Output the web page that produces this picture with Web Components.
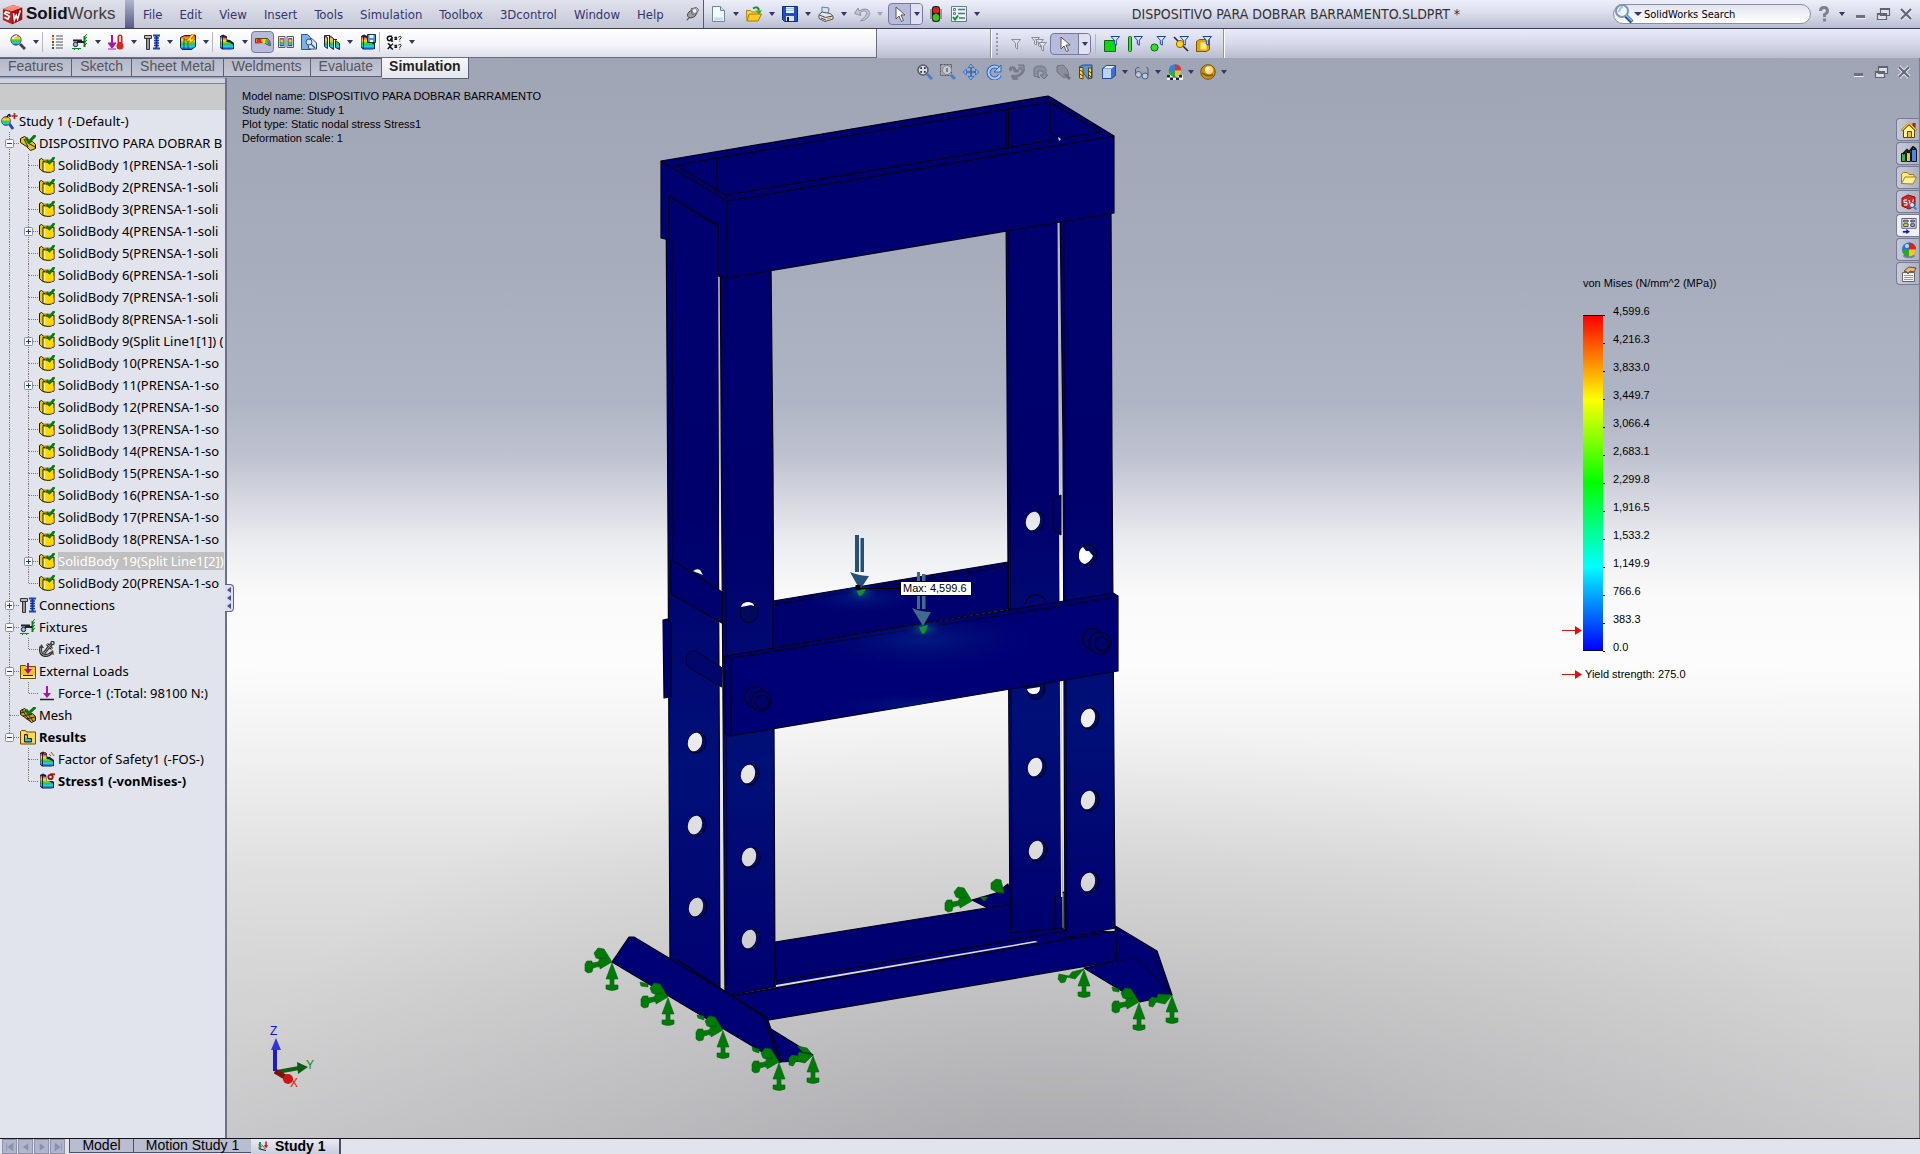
<!DOCTYPE html>
<html lang="en">
<head>
<meta charset="utf-8">
<title>SolidWorks - DISPOSITIVO PARA DOBRAR BARRAMENTO.SLDPRT</title>
<style>
  html, body { margin: 0; height: 100%; overflow: hidden; background: #e1e4ec; }
  body { font-family: "Noto Sans", "Open Sans", sans-serif; font-size: 13px; color: #000; }
</style>
</head>
<body>
<sw-app></sw-app>
<script>
const RAINBOW = `<linearGradient id="r" x1="0" y1="0" x2="0" y2="1"><stop offset="0" stop-color="#f22"/><stop offset=".3" stop-color="#fd2"/><stop offset=".6" stop-color="#2c3"/><stop offset=".8" stop-color="#2cf"/><stop offset="1" stop-color="#13c"/></linearGradient>`;
const FUNNEL = `<path d="M7 0.5h8.500l-3.200 3.700v5l-2-1.200v-3.800z" fill="#dcebff" stroke="#1a3fa8"/>`;
const YBODY = `<path d="M.5 2.500l2-1 3 2.500v11l-3-1.500-2-2z" fill="#e8c820" stroke="#201800"/><path d="M4 4.500q5.500 2 11-.5v10q-5 3-11 .5z" fill="#ffd800" stroke="#201800"/><path d="M5.500 6v8" stroke="#fff3a0" stroke-width="1.500"/><path d="M9 14.500q3 .3 5.500-1V9" stroke="#ff9f00" fill="none"/><path d="M3 2.500h10l-1 2-4 1z" fill="#b98a00"/><path d="M7.500 3.500l3 2.500 5-6" fill="none" stroke="#0a7a10" stroke-width="2.600"/>`;
const STAIR = `<path d="M1 2l3-1.500 4 2v3l3 .5 4 3v6l-3 .5H3l-2-2z" fill="#124"/><path d="M4 3l3.500 1v4l3 .5 3.500 2V15H4z" fill="url(#r)"/><path d="M1.500 3L3 2.500v12l-1.500-1.500z" fill="url(#r)"/>`;
const CUBE = `<path d="M1.500 4.500l4-3h9v10l-4 3h-9z" fill="#3f6fc8" stroke="#274a8f"/><path d="M2 5h8v9H2z" fill="#b9d4f6"/><path d="M2.500 4.500l3-2.500h8l-3 2.500z" fill="#e4f0ff"/>`;
const PRINTBODY = `<path d="M4 1l7 1-1 6-6-1z" fill="#cfe4fa" stroke="#5d7ea8"/><path d="M1 8.500l3-2.500 8 1.500 3 2.500v3l-8 2.500-6-3z" fill="#e4e6ea" stroke="#555"/><path d="M1.500 9l6 2.500 7-1.500M3 12l5 2" stroke="#444" fill="none"/><path d="M9 13l4-1" stroke="#d93"/>`;
const ICONS = {
  logo: [24, `<path d="M1 6L12 1.500 22 4.500v13L11 22.500 1 18z" fill="#c01d1d"/><path d="M1 6L12 1.500 22 4.500 11 8.500z" fill="#ff8d80"/><path d="M11 8.500L22 4.500v13l-11 5z" fill="#9c1010"/><path d="M8.500 10.500l-4-1.500-1.500 2 5 3-1.500 3-4-2" fill="none" stroke="#fff" stroke-width="1.900"/><path d="M12.500 10.500l1 7.500 2-5 1.500 4 3-9.500" fill="none" stroke="#fff" stroke-width="1.700"/>`],
  pin: [16, `<path d="M8 9l-6 6" stroke="#555" stroke-width="1.500"/><ellipse cx="8" cy="8" rx="5.500" ry="4" transform="rotate(-30 8 8)" fill="#9a9eaa" stroke="#444"/><path d="M7 2l6-1.500 2.500 2.500L13 8l-5 0z" fill="#c9ccd6" stroke="#555"/><circle cx="11" cy="4.500" r="2.800" fill="#f4f5f8" stroke="#777"/>`],
  newdoc: [16, `<path d="M2.500.5h8l4 4v11h-12z" fill="#f3faff" stroke="#6d8799"/><path d="M10.500.5v4h4" fill="#cfe2ee" stroke="#6d8799"/><path d="M4 13h9" stroke="#c9dbe8" stroke-width="3"/>`],
  open: [16, `<path d="M.5 4.500h4l1 1.500h7v8.500H1z" fill="#ffdf5a" stroke="#a9780c"/><path d="M3 8h12.500l-3.500 7H1z" fill="#ffc928" stroke="#a9780c"/><path d="M7 2.500q5-3 6 2" stroke="#1a8f1a" stroke-width="2" fill="none"/><path d="M9.500 4.500h6.500l-3 4z" fill="#27b227"/>`],
  save: [16, `<path d="M.5.500h15v15h-13l-2-2z" fill="#1e4fc4" stroke="#0d2c80"/><path d="M4 1h8v6H4z" fill="#eaf2ff"/><path d="M4 2.500h8M4 4.500h8" stroke="#a9c1ee"/><path d="M4 10h8v5H4z" fill="#dfe6f2"/><path d="M5 11h2v4H5z" fill="#123"/>`],
  print: [16, PRINTBODY],
  undo: [16, `<path d="M4 2L.5 7.500l6.500 2-1.200-2.700Q11 3 12.500 6.500 13 10 6.500 15q9-1.500 9-8.500-2-6-10.500-1.700z" fill="#c4c7d2" stroke="#8d91a2"/>`],
  cursor: [16, `<path d="M4 1v12l3-3 2.500 5.500 2-1L9 9h4z" fill="#fff" stroke="#555"/>`],
  light: [16, `<rect x="4" y="0" width="8" height="16" rx="3" fill="#1c1c1c"/><circle cx="8" cy="4.300" r="3.200" fill="#e02020"/><circle cx="8" cy="11.500" r="3.400" fill="#3ec81e"/><path d="M3 3v10M13 3v10" stroke="#555"/>`],
  options: [16, `<path d="M.5.500h15v15H.5z" fill="#e8f4f8" stroke="#5d7f8f"/><path d="M2.500 2.500h2v2h-2zM2.500 6.500h2v2h-2z" fill="none" stroke="#678"/><path d="M7 3.500h7M7 7.500h7M8 12h6" stroke="#57707e" stroke-width="1.500"/><path d="M2 11l2 2.500 3-4" stroke="#0a9a20" stroke-width="2" fill="none"/>`],
  search: [20, `<circle cx="8" cy="7" r="6" fill="#eef7ff" stroke="#7d95ad" stroke-width="2"/><path d="M5 8q1-5 4-5" stroke="#9fc2e0" stroke-width="2" fill="none"/><path d="M12 12l6 6" stroke="#255b9b" stroke-width="4"/><path d="M12 11l6 6" stroke="#8fc3ee" stroke-width="1.500"/>`],
  help: [16, `<path d="M4.500 5q0-3.500 3.500-3.500T11.500 5q0 2-3 3.500v2.500" fill="none" stroke="#7d8192" stroke-width="3"/><path d="M7 12.500h3v3H7z" fill="#7d8192"/>`],
  min: [16, `<path d="M4 9h9v3H4z" fill="#6c7080"/><path d="M4 12.500h9.500" stroke="#eef"/>`],
  restore: [16, `<path d="M5.500 2.500h9v7h-9zM2.500 7.500h9v6h-9z" fill="#dfe1ea" stroke="#5f6372" stroke-width="1.200"/><path d="M5 3h10M2 8h10" stroke="#5f6372" stroke-width="2"/>`],
  close: [16, `<path d="M3 3l10 10M13 3L3 13" stroke="#e8e9f2" stroke-width="4"/><path d="M3 3l10 10M13 3L3 13" stroke="#646878" stroke-width="2.200"/>`],
  magnify: [16, `<path d="M10 10l5 5" stroke="#445" stroke-width="3"/><circle cx="6" cy="6" r="5.200" fill="url(#r)" stroke="#567"/><path d="M3 5q1-3 4-3" stroke="#fff" stroke-width="1.500" fill="none"/>`],
  list: [16, `<path d="M7 2h7M7 5h7M7 8h7M7 11h7M7 14h7" stroke="#555"/><path d="M3 1h2v2H3z" fill="#c33"/><path d="M3 4h2v2H3z" fill="#e83"/><path d="M3 7h2v2H3z" fill="#c22"/><path d="M3 10h2v2H3z" fill="#3a3"/><path d="M3 13h2v2H3z" fill="#33c"/>`],
  fixture: [16, `<path d="M12 3l3-3M12 6l3-3M12 9l3-3M12 12l3-3" stroke="#0a8a1a"/><path d="M12.500 2v11" stroke="#0a7a14" stroke-width="2"/><path d="M1 6.500h9M5 8h7" stroke="#222" stroke-width="2"/><circle cx="3.500" cy="10.500" r="2.200" fill="#9db8e8" stroke="#223"/><path d="M0 14.500h9M2 16l2-2M6 16l2-2" stroke="#0a8a1a"/>`],
  load: [16, `<path d="M4 1v10" stroke="#b010b0" stroke-width="2"/><path d="M0 9h8l-4 5zM0 15h8" fill="#b010b0" stroke="#b010b0"/><path d="M12 3v9" stroke="#c8262a" stroke-width="5" stroke-linecap="round"/><circle cx="12" cy="12" r="3.500" fill="#d22"/><path d="M12 2v6" stroke="#fff" stroke-width="1.500"/>`],
  connect: [16, `<path d="M.5 1.500h7v3h-7z" fill="#bbb" stroke="#333"/><path d="M2.500 4.500h3v11h-3z" fill="#999" stroke="#333"/><path d="M9 1.500h7M9 14.500h7" stroke="#124ab0" stroke-width="2"/><path d="M10 4h5M10 6.500h5M10 9h5M10 11.500h5" stroke="#1133a0" stroke-width="1.500"/><path d="M12.500 2v12" stroke="#1133a0" stroke-width="2"/>`],
  run: [16, `<path d="M.5 3.500l4-2h11v11l-4 3H2l-1.500-2z" fill="url(#r)" stroke="#124"/><path d="M4 4v10.500M8 6v9M4 6l8-1" stroke="#124" stroke-width=".7"/><path d="M12 0L6 7h4l-3 5 8-7h-4l4-5z" fill="#ffe640" stroke="#b35b00" stroke-width=".7"/>`],
  stair: [16, STAIR],
  deform: [16, `<path d="M.5 4.500h12q3 2 3 7l-4-1q-1-2-3-2l-8 .5z" fill="#fa7a20" stroke="#641"/><path d="M4 5v3.500" stroke="#e22" stroke-width="4"/><path d="M9 5v4" stroke="#fd2" stroke-width="3"/><path d="M11 6l1.500 4" stroke="#3c4" stroke-width="2.500"/><path d="M13.500 7l1 4" stroke="#28d" stroke-width="2"/>`],
  compare: [16, `<path d="M.5 2.500h6.500v11H.5zM9 2.500h6.500v11H9z" fill="#eef" stroke="#557"/><path d="M2 4.500h3.500v7.500H2zM10.500 4.500H14v7.500h-3.500z" fill="url(#r)" stroke="#223" stroke-width=".5"/>`],
  doc: [16, `<path d="M.5.500h6l3 3v12h-9z" fill="#7fb0ea" stroke="#2b5590"/><path d="M6 6.500l5-2 4.500 4.500v6H8z" fill="#dce9f6" stroke="#27466e"/><circle cx="8" cy="8" r="3" fill="#c9e2fa" stroke="#34567e"/><path d="M10 10l4 4" stroke="#34567e" stroke-width="1.500"/>`],
  section: [16, `<path d="M.5 1.500l3 2v11l-3-2zM5.500 1.500l4 3v11l-4-3zM11.500 6.500l4 3v6l-4-2z" fill="url(#r)" stroke="#224"/><path d="M1 1.500h5M10 5.500h3" stroke="#224"/>`],
  savestair: [16, STAIR + `<path d="M7.500.5h8v8h-8z" fill="#4d8ee0" stroke="#134"/><path d="M9.500 1h4v3h-4z" fill="#eef"/><path d="M10 6h3v2h-3z" fill="#fff"/>`],
  ax: [18, `<g fill="none" stroke="#111" stroke-width="1.600"><path d="M7 2.500H4q-2.500 0-2.500 2.500t3 2.500L7 3.500l-.500 4.500h1.500M2 11q2 0 3 3t3 3M8 11q-3 2-6 6M9.500 4h3M9.500 6h3M9.500 13h3M9.500 15h3" /><path d="M14 3.500q3-2 3 .5l-1.500 2v.6M14 12.500q3-2 3 .5l-1.500 2v.6M15.500 7.500v1M15.500 16.500v1" stroke-width="1.100"/></g>`],
  funnel: [16, `<path d="M3.500 3.500h9L9.500 7v6l-2-1.500V7z" fill="#e0e2ea" stroke="#8a8e9c"/>`],
  funnels: [16, `<g fill="#e0e2ea" stroke="#8a8e9c"><path d="M.5 1.500h8L5.500 5v4l-2-1V5z"/><path d="M4.500 3.500h8L9.500 7v4l-2-1V7z"/><path d="M7.500 6.500h8L12.500 10v5l-2-1v-4z"/></g>`],
  ffacet: [16, `<path d="M.5 4.500h11v11H.5z" fill="#14d614" stroke="#0a6a0a"/>` + FUNNEL],
  fedge: [16, `<rect x="1.500" y=".5" width="3" height="15" rx="1" fill="#3ae03a" stroke="#0a6a0a"/>` + FUNNEL],
  fvert: [16, `<circle cx="4.500" cy="11.500" r="3.600" fill="#2fe02f" stroke="#0a6a0a"/>` + FUNNEL],
  faxis: [16, FUNNEL + `<path d="M1 1l14 14" stroke="#222" stroke-width="1.500"/><circle cx="7" cy="8" r="3.600" fill="#ffd21c" stroke="#8a6200"/>`],
  fbody: [16, `<path d="M.5 5.500l3-2h10v10l-3 2H.5z" fill="#e2a800" stroke="#7c5600"/><path d="M4.500 6.500h6v7h-6z" fill="#ffe98a"/>` + FUNNEL],
  zoomfit: [16, `<circle cx="6" cy="6" r="5" fill="#d6d9e2" stroke="#555a68" stroke-width="1.500"/><path d="M4 5V4h1M7 4h1v1M8 7v1H7M5 8H4V7" stroke="#222" stroke-width="1.300" fill="none"/><path d="M10 10l5 5" stroke="#4d80c0" stroke-width="3"/>`],
  zoomarea: [16, `<path d="M.5.500h11v11H.5z" fill="none" stroke="#555" stroke-dasharray="2 1"/><circle cx="7" cy="6" r="4.500" fill="#c5cad8" stroke="#888"/><path d="M7 4v4" stroke="#333"/><path d="M11 11l4 4" stroke="#4d80c0" stroke-width="3"/>`],
  pan: [16, `<path d="M8 1v14M1 8h14" stroke="#2f63b8" stroke-width="1.500"/><path d="M8 0l3 3.500H5zM8 16l3-3.500H5zM0 8l3.500-3v6zM16 8l-3.500-3v6z" fill="#8ab6ee" stroke="#2f63b8" stroke-width=".8"/>`],
  rotate: [16, `<path d="M13 4.500A6 6 0 1 0 14 11" fill="none" stroke="#2f63b8" stroke-width="4"/><path d="M13 4.500A6 6 0 1 0 14 11" fill="none" stroke="#a9ccf4" stroke-width="2"/><path d="M8 8h7V1z" fill="#a9ccf4" stroke="#2f63b8"/>`],
  g1: [16, `<path d="M2 7q-2-4 3-3l1 3 4 0M10 5q5-3 4 2-2 5-10 6M3 11l2 4 4-1" fill="none" stroke="#777b8a" stroke-width="3"/><path d="M9 1h6v6" fill="#8c909e" stroke="#6f7382"/>`],
  g2: [16, `<path d="M2 12V6q0-4 6-4t6 4v5h2l-4 4-4-4h3V7H6v5l2 2z" fill="#8c909e" stroke="#6f7382"/>`],
  g3: [16, `<path d="M2 2l6-1 4 4 2 6-5 3-7-6z" fill="#8c909e" stroke="#6f7382"/><path d="M10 10l5 5" stroke="#6f7382" stroke-width="3"/>`],
  sectview: [16, `<path d="M1 3l4-2h9v13l-4 1z" fill="#5b93e0" stroke="#234a86"/><path d="M1.500 3.500h3.500v11.500l-3.500-1z" fill="#ffd93b" stroke="#5a4600"/><path d="M10.500 4h3v10h-3z" fill="#ffd93b" stroke="#5a4600"/><path d="M2 6l3 2M2 10l3 2M11 7l2 2M11 11l2 2" stroke="#5a4600"/>`],
  cube: [16, CUBE],
  glasses: [16, `<circle cx="4.500" cy="10.500" r="3" fill="#b8cbe2" stroke="#4b5a70"/><circle cx="11" cy="12" r="3" fill="#b8cbe2" stroke="#4b5a70"/><path d="M1.500 10V5q2-3 4-1M14 11V4.500q0-1-1.500-1" fill="none" stroke="#4b5a70"/>`],
  scene: [16, `<path d="M0 11h16v5H0z" fill="#eee"/><path d="M0 11h3v2.500H0zM6 11h3v2.500H6zM12 11h3v2.500h-3zM3 13.500h3V16H3zM9 13.500h3V16H9z" fill="#222"/><circle cx="8" cy="6.500" r="6.300" fill="#3b7de0"/><path d="M8 6.500V.200A6.300 6.300 0 0 1 14.300 6.500z" fill="#d33"/><path d="M8 6.500h6.300A6.300 6.300 0 0 1 8 12.800z" fill="#e2c53a"/><path d="M8 6.500v6.300A6.300 6.300 0 0 1 1.700 6.500z" fill="#3aa53a"/>`],
  gold: [16, `<circle cx="8" cy="8" r="7.300" fill="#c8901c" stroke="#7a5408"/><circle cx="9" cy="6" r="4" fill="#ffdc78"/><circle cx="7.500" cy="5" r="2" fill="#fff4cc"/><path d="M2 9q5 4 11 2" stroke="#7a5408" fill="none" stroke-width="1.500"/>`],
  home: [16, `<path d="M11.500 1h3v6h-3z" fill="#b01818"/><path d="M2.500 8L8 3l5.500 5v7.500h-11z" fill="#fff2a0" stroke="#5c4300"/><path d="M.5 8.500L8 1.500l7.500 7" fill="none" stroke="#b87b00" stroke-width="2"/><path d="M1 7.800L8 1.200l7 6.600" fill="none" stroke="#ffd840"/><path d="M6.500 9.500h4v6h-4z" fill="#f2c21c" stroke="#5c4300"/>`],
  library: [16, `<path d="M.5 7.500h4v8h-4z" fill="#35b545" stroke="#111"/><path d="M5.500 6.500h4v9h-4z" fill="#f0c81e" stroke="#111"/><path d="M10.500 3.500h5v12h-5z" fill="#4b86e8" stroke="#111"/><path d="M2 8l4-4 2 2 4-5 3 2" stroke="#111" fill="none" stroke-width="2"/>`],
  folder: [16, `<path d="M.5 13.500V4l2-1.500h4l1.500 2h5V7" fill="#ffe88a" stroke="#a87a10"/><path d="M.5 13.500L4 7h11.500L12 14z" fill="#fff09a" stroke="#a87a10"/>`],
  swsearch: [16, `<path d="M1 4l6-3 7 2v9l-6 3-7-3z" fill="#cf2a2a" stroke="#8a0f0f"/><path d="M6 6H3v2.500h3V11H3M8 6l1 5 1-3 1 3 1.500-6" stroke="#fff" fill="none"/><circle cx="11" cy="11" r="2.500" fill="#cfe6ff" stroke="#456"/><path d="M12.500 12.500l3 3" stroke="#3b7de0" stroke-width="2"/>`],
  palette: [18, `<path d="M1 .5h16v11H1z" fill="#eef3ff" stroke="#446"/><path d="M3 2.500h5v2H3zM3 6.500h5v3H3z" fill="#f0e040" stroke="#334"/><path d="M11 2.500h4v2h-4zM11 6.500h4v3h-4z" fill="#9db8d8" stroke="#334"/><path d="M2 15.500h5" stroke="#0a1ab8" stroke-width="2"/><path d="M6 12.500l4 3-4 2.500z" fill="#0a1ab8"/>`],
  ball: [16, `<ellipse cx="8" cy="14" rx="6" ry="2" fill="#7b7f8e"/><circle cx="8" cy="7.500" r="7" fill="#2f6fe0"/><path d="M8 7.500V.500A7 7 0 0 1 15 7.500z" fill="#d82222"/><path d="M8 7.500h7A7 7 0 0 1 8 14.500z" fill="#f0c81e"/><path d="M8 7.500v7A7 7 0 0 1 1 7.500z" fill="#2aa52a"/><circle cx="6" cy="4" r="2" fill="#bcd6ff"/>`],
  props: [16, `<path d="M1.500 6.500h12v9h-12z" fill="#f4f4f4" stroke="#666"/><path d="M3 9.500h9M3 11.500h9M3 13.500h9" stroke="#999"/><path d="M3 5l5-4 7 1-2 4-4-1-2 3-1-2z" fill="#e8b97c" stroke="#70471a"/>`],
  study: [18, `<path d="M8 10l5 7" stroke="#2349b0" stroke-width="3"/><circle cx="6" cy="9" r="4.500" fill="url(#r)" stroke="#567"/><path d="M7 5q3-5 3 0" stroke="#111" fill="none" stroke-width="1.500"/><path d="M14.500 1v6M11.500 4h6" stroke="#c01818" stroke-width="1.600"/>`],
  part: [16, `<path d="M.5 3.500l4-2 3 2v4l5-1 3 3v4l-5 2-4-4-6-4z" fill="#e9c61c" stroke="#201800"/><path d="M4 4l4 8M8 8l7 4" stroke="#201800"/><path d="M6 3l3 4 6.500-7" fill="none" stroke="#0a7a10" stroke-width="3"/>`],
  body: [16, YBODY],
  anchor: [16, `<g fill="none"><path d="M12.500 3L5 12M8 3l5 5" stroke="#333" stroke-width="3"/><path d="M12.500 3L5 12M8 3l5 5" stroke="#aaa"/><circle cx="13.500" cy="2" r="1.600" stroke="#333" stroke-width="1.300"/><path d="M2 5.500Q0 14 6.500 14.500q4 0 6-3" stroke="#222" stroke-width="3"/><path d="M2 5.500Q0 14 6.500 14.500q4 0 6-3" stroke="#aaa"/></g><path d="M0 7l2.500-4L5 7zM10 12l4-3 1 5z" fill="#444"/>`],
  loads: [16, `<path d="M.5 2.500h5l1 1h9v12H.5z" fill="#f4c21c" stroke="#6b4a00"/><path d="M1 12h14v3H1z" fill="#fbe9b0"/><path d="M8 0v7" stroke="#a010a0" stroke-width="2"/><path d="M4 6h8l-4 5z" fill="#a010a0"/><path d="M3 12.500h10" stroke="#222"/>`],
  force: [16, `<path d="M8 1v8" stroke="#b010b0" stroke-width="2"/><path d="M4 8h8l-4 5z" fill="#b010b0"/><path d="M1 14.500h14" stroke="#222" stroke-width="1.500"/>`],
  mesh: [16, `<path d="M.5 3.500l4-2 4 3v3l4-1 3 3v4l-4 2-5-4-6-4z" fill="#c9a21c" stroke="#201800"/><path d="M2 3l8 11M5 3l8 11M1 6l7-2M3 9l9-2M6 12l9-2" stroke="#201800" stroke-width=".9"/><path d="M6 3l3 3 6.500-6" fill="none" stroke="#0a7a10" stroke-width="3"/>`],
  results: [16, `<path d="M.5 2.500l1-1h4l1 1.500h9v12H.5z" fill="#ffd84a" stroke="#6b4a00"/><path d="M4.500 5.500h3v4h4v3.500h-7z" fill="url(#r)" stroke="#222"/>`],
  fos: [16, STAIR + `<path d="M5 1l2 2M7 1L5 3M10 3l2 2M12 1l3 4" stroke="#c33510"/>`],
  stress: [16, STAIR + `<path d="M7 0h9v8H8z" fill="#e1e4ec"/><circle cx="11.500" cy="4" r="2.200" fill="none" stroke="#a01010" stroke-width="1.800"/><path d="M11 1.300h5" stroke="#a01010" stroke-width="1.800"/>`],
  studytab: [16, `<path d="M4 3v9l8 2" stroke="#222" stroke-width="1.500" fill="none"/><path d="M2 6l4 3M2 10l3 3M5 3L3 5" stroke="#1a8a1a" stroke-width="1.500"/><path d="M6 6l5 6" stroke="#444"/><path d="M12 2v6" stroke="#c01818" stroke-width="2"/><path d="M9 7h6l-3 4z" fill="#c01818"/>`],
  first: [16, `<path d="M3.500 3v10M12 3v10L5 8z" fill="#8c90ab" stroke="#8c90ab"/>`],
  prev: [16, `<path d="M11 3v10L4 8z" fill="#8c90ab"/>`],
  next: [16, `<path d="M5 3v10l7-5z" fill="#8c90ab"/>`],
  last: [16, `<path d="M12.500 3v10M4 3v10l7-5z" fill="#8c90ab" stroke="#8c90ab"/>`]
};

function define(name, css, html) {
  const tpl = document.createElement('template');
  tpl.innerHTML = `<style>*{box-sizing:border-box}button{font:inherit;color:inherit;border:0;padding:0;margin:0;background:none}${css}</style>`;
  customElements.define(name, class extends HTMLElement {
    connectedCallback() {
      if (this.shadowRoot) return;
      const root = this.attachShadow({ mode: 'open' });
      root.append(tpl.content.cloneNode(true));
      const body = document.createElement('template');
      body.innerHTML = typeof html === 'function' ? html(this) : html;
      root.append(body.content.cloneNode(true));
    }
  });
}

/* one drawn glyph */
define('sw-icon', `:host{display:inline-block;flex:none;width:16px;height:16px}svg{display:block;width:100%;height:100%}`, el => {
  const [box, art] = ICONS[el.getAttribute('name')];
  return `<svg viewBox="0 0 ${box} ${box}" aria-hidden="true"><defs>${RAINBOW}</defs>${art}</svg>`;
});

/* toolbar button, optionally with a drop-down arrow */
define('sw-tool', `
  :host{display:inline-flex;flex:none;height:22px;align-items:center}
  button{height:22px;display:flex;align-items:center;justify-content:center}
  .main{width:23px}
  .drop{width:13px}
  .drop::before{content:"";border:3px solid transparent;border-top:4px solid #34365c;border-bottom:0}
  :host([off]) .drop::before{border-top-color:#a3a6b8}
  :host([tight]) .drop{width:10px}
  :host([pressed]){border:1px solid #77799a;border-radius:4px;background:#b9bbdc}
  :host([pressed]) .main{height:20px;width:21px}
  :host([wide][pressed]) .main{width:27px}
  :host([pressed]) .drop{height:20px;width:12px;border-left:1px solid #77799a;background:#dfe1f0;border-radius:0 3px 3px 0}`,
  el => {
    const label = el.getAttribute('label');
    return `<button class="main" type="button" aria-label="${label}"><sw-icon name="${el.getAttribute('icon')}"></sw-icon></button>` +
      (el.hasAttribute('menu') ? `<button class="drop" type="button" aria-label="${label} options"></button>` : '');
  });

define('sw-menu-bar', `
  :host{display:flex;align-items:stretch;height:29px;border-bottom:1px solid #3c3f55;background:linear-gradient(#eceefa,#dcdeec 45%,#b9bdd2);font-family:"DejaVu Sans Condensed","DejaVu Sans",sans-serif}
  .brand{display:flex;align-items:center;gap:2px;width:125px;padding-left:2px;flex:none;background:linear-gradient(#dfe1ea,#c4c7d4);font:17px "Liberation Sans",sans-serif;color:#3d3d3d}
  .brand sw-icon{width:22px;height:23px}
  .brand b{color:#111}
  .edge{width:9px;flex:none;background:linear-gradient(#b2b5cd,#565a86)}
  nav{display:flex;align-items:center;gap:17px;padding-left:9px;width:570px;flex:none;background:linear-gradient(#dfe1ec,#d3d5e2 50%,#c3c6d6);border-right:1px solid #565a78;color:#34356a;font-size:13px}
  nav sw-icon{width:14px;height:14px;margin:0 4px 0 auto}
  .quick{display:flex;align-items:center;padding-left:2px}
  .quick .sel{margin:0 1px 0 2px}
  h1{flex:1;margin:0;text-align:center;font-weight:400;font-size:14px;color:#333;white-space:nowrap;line-height:28px;padding-right:4px}
  label{align-self:center;display:flex;align-items:center;width:198px;height:20px;margin-right:1px;border:1px solid #8c8f9f;border-radius:10px;background:linear-gradient(#e2e4ee,#fff)}
  label sw-icon{width:20px;height:20px}
  label i{border:4px solid transparent;border-top:4px solid #34365c;border-bottom:0;margin:0 2px 0 0}
  input{border:0;background:none;outline:0;padding:0;width:150px;font:11px "DejaVu Sans Condensed","DejaVu Sans",sans-serif;color:#000}
  .win{display:flex;align-items:center;width:108px}`,
  `<div class="brand"><sw-icon name="logo"></sw-icon><span><b>Solid</b>Works</span></div><div class="edge"></div>
  <nav>${['File','Edit','View','Insert','Tools','Simulation','Toolbox','3Dcontrol','Window','Help'].map(t => `<button type="button">${t}</button>`).join('')}<sw-icon name="pin"></sw-icon></nav>
  <div class="quick">
    <sw-tool icon="newdoc" label="New" menu></sw-tool><sw-tool icon="open" label="Open" menu></sw-tool><sw-tool icon="save" label="Save" menu></sw-tool><sw-tool icon="print" label="Print" menu></sw-tool><sw-tool icon="undo" label="Undo" menu off></sw-tool><sw-tool class="sel" icon="cursor" label="Select" menu pressed></sw-tool><sw-tool icon="light" label="Rebuild"></sw-tool><sw-tool icon="options" label="Options" menu></sw-tool>
  </div>
  <h1>DISPOSITIVO PARA DOBRAR BARRAMENTO.SLDPRT *</h1>
  <label for="q"><sw-icon name="search"></sw-icon><i></i><input id="q" value="SolidWorks Search" aria-label="SolidWorks Search"></label>
  <div class="win"><sw-tool icon="help" label="Help" menu></sw-tool><sw-tool icon="min" label="Minimize"></sw-tool><sw-tool icon="restore" label="Restore"></sw-tool><sw-tool icon="close" label="Close"></sw-tool></div>`);

define('sw-tool-rows', `
  :host{display:flex;height:29px;background:linear-gradient(#e9ebf9,#d6d9ea 50%,#b9bdd0)}
  .sim{display:flex;align-items:center;width:877px;padding:0 0 2px 6px;background:linear-gradient(#fff,#f3f4f8 60%,#dcdeea);border-right:1px solid #6b6e7c;border-bottom:1px solid #6b6e7c}
  .sep{width:3px;height:20px;border-left:1px solid #b4b6c2}
  .filter{display:flex;align-items:center;margin-left:113px;padding:0 8px 0 3px;border-left:1px solid #8f92a2;border-right:1px solid #8f92a2;box-shadow:1px 0 #fff,inset 1px 0 #fff}
  .grip{width:2px;height:22px;margin:0 6px 0 2px;background:repeating-linear-gradient(#9598aa 0 2px,transparent 2px 4px)}
  .sel{margin:0 1px 0 0}
  .filter .sep{margin:0 2px 0 3px}`,
  `<div class="sim">
    <sw-tool icon="magnify" label="Study advisor" menu></sw-tool><div class="sep"></div><sw-tool icon="list" label="Apply material"></sw-tool><sw-tool icon="fixture" label="Fixtures" menu></sw-tool><sw-tool icon="load" label="External loads" menu></sw-tool><sw-tool icon="connect" label="Connections" menu></sw-tool><sw-tool icon="run" label="Run" menu></sw-tool><div class="sep"></div><sw-tool icon="stair" label="Results" menu></sw-tool><sw-tool icon="deform" label="Deformed result" pressed></sw-tool><sw-tool icon="compare" label="Compare results"></sw-tool><sw-tool icon="doc" label="Report"></sw-tool><sw-tool icon="section" label="Plot tools" menu></sw-tool><sw-tool icon="savestair" label="Include image"></sw-tool><div class="sep"></div><sw-tool icon="ax" label="Parameters" menu></sw-tool>
  </div>
  <div class="filter"><div class="grip"></div>
    <sw-tool icon="funnel" label="Toggle filters"></sw-tool><sw-tool icon="funnels" label="Clear filters"></sw-tool><sw-tool class="sel" icon="cursor" label="Select" menu pressed wide></sw-tool><div class="sep"></div><sw-tool icon="ffacet" label="Filter faces"></sw-tool><sw-tool icon="fedge" label="Filter edges"></sw-tool><sw-tool icon="fvert" label="Filter vertices"></sw-tool><sw-tool icon="faxis" label="Filter axes"></sw-tool><sw-tool icon="fbody" label="Filter bodies"></sw-tool>
  </div>`);

define('sw-command-tabs', `
  :host{display:flex;align-items:flex-start;font:14px "Liberation Sans",sans-serif}
  button{height:19px;padding:0 8px 2px;border:1px solid #5d6072;border-left:0;background:linear-gradient(#b4b8c8,#c3c7d6);color:#55565e;line-height:15px}
  button[aria-selected=true]{height:21px;background:linear-gradient(#f6f7fa,#e4e6ee);border-top:0;color:#222;font-weight:700;padding:0 7px 4px}`,
  `${['Features','Sketch','Sheet Metal','Weldments','Evaluate','Simulation'].map((t, i) => `<button type="button" role="tab" aria-selected="${i === 5}">${t}</button>`).join('')}`);

/* one line of the study tree: guides for each level, icon, caption */
define('sw-tree-row', `
  :host{display:flex;height:22px;align-items:center;white-space:nowrap;overflow:hidden}
  svg{flex:none;width:19px;height:22px}
  sw-icon{margin:0 3px 0 1px}
  .root{width:18px;height:18px;margin:0 1px 0 0}
  span{line-height:18px;flex:1}
  :host([bold]) span{font-weight:700}
  :host([selected]) span{background:#c0c0c0;color:#fff}`,
  el => {
    const guides = (el.getAttribute('guides') || '').split('');
    const cell = g => {
      const up = `<path d="M9.500 0v11"/>`, down = `<path d="M9.500 11v11"/>`, arm = `<path d="M10 11.500h9"/>`;
      let s = { '|': up + down, ' ': '', 't': up + down + arm, 'l': up + arm, '+': up + down + arm, '-': up + down + arm, 'e': up + arm }[g];
      let box = '';
      if ('+-e'.includes(g)) box = `<rect x="5.500" y="7.500" width="8" height="8" rx="1" fill="#f6f7fb" stroke="#8b8e98"/><path d="M7 11.500h5${g === '+' ? 'M9.500 9v5' : ''}" stroke="#223a7c"/>`;
      return `<svg viewBox="0 0 19 22" aria-hidden="true"><g stroke="#777" stroke-dasharray="1 1">${s}</g>${box}</svg>`;
    };
    return guides.map(cell).join('') + `<sw-icon ${guides.length ? '' : 'class="root"'} name="${el.getAttribute('icon')}"></sw-icon><span><slot></slot></span>`;
  });

const bodies = Array.from({ length: 20 }, (_, i) => {
  const n = i + 1, last = n === 20, split = { 9: '9(Split Line1[1]) (', 19: '19(Split Line1[2])' }[n];
  const g = [4, 9, 11, 19].includes(n) ? '+' : last ? 'l' : 't';
  const text = split || (n < 10 ? `${n}(PRENSA-1-soli` : `${n}(PRENSA-1-so`);
  return `<sw-tree-row guides="|${g}" icon="body" ${n === 19 ? 'selected' : ''}>SolidBody ${text}</sw-tree-row>`;
}).join('');

define('sw-study-tree', `
  :host{display:flex;flex-direction:column;position:relative;background:#e1e4ec;border-right:2px solid #6d7188}
  .strip{height:6px;flex:none;background:#cdd3e3;border-bottom:1px solid #7d839c;border-top:1px solid #b8bdcf}
  .blank{height:26px;flex:none;background:#cacaca}
  .rows{margin-right:1px;overflow:hidden}
  .split{position:absolute;left:100%;top:506px;width:9px;height:28px;border:1px solid #5f6480;border-left:0;border-radius:0 4px 4px 0;background:#dcdff0;display:flex;flex-direction:column;justify-content:space-evenly;align-items:center}
  .split i{border:3px solid transparent;border-right:4px solid #4a4f8c;border-left:0}`,
  `<div class="strip"></div><div class="blank"></div>
  <div class="rows" role="tree">
  <sw-tree-row icon="study">Study 1 (-Default-)</sw-tree-row>
  <sw-tree-row guides="-" icon="part">DISPOSITIVO PARA DOBRAR B</sw-tree-row>
  ${bodies}
  <sw-tree-row guides="+" icon="connect">Connections</sw-tree-row>
  <sw-tree-row guides="-" icon="fixture">Fixtures</sw-tree-row>
  <sw-tree-row guides="|l" icon="anchor">Fixed-1</sw-tree-row>
  <sw-tree-row guides="-" icon="loads">External Loads</sw-tree-row>
  <sw-tree-row guides="|l" icon="force">Force-1 (:Total: 98100 N:)</sw-tree-row>
  <sw-tree-row guides="t" icon="mesh">Mesh</sw-tree-row>
  <sw-tree-row guides="e" icon="results" bold>Results</sw-tree-row>
  <sw-tree-row guides=" t" icon="fos">Factor of Safety1 (-FOS-)</sw-tree-row>
  <sw-tree-row guides=" l" icon="stress" bold>Stress1 (-vonMises-)</sw-tree-row>
  </div>
  <button class="split" type="button" aria-label="Collapse panel"><i></i><i></i><i></i></button>`);

/* the meshed frame with its loads and restraints */
const hole = (x, y) => `<g transform="rotate(16 ${x} ${y})"><ellipse cx="${x + 2}" cy="${y}" rx="9" ry="10.500" fill="#000c5c" stroke="#000018"/><ellipse cx="${x}" cy="${y}" rx="7" ry="9.500" fill="url(#air)"/></g>`;
const part = (x, y, d, inner) => `<g><ellipse cx="${x + 2}" cy="${y + 1}" rx="9" ry="10.500" fill="#000a5c" stroke="#000018"/><path d="${d}" fill="${inner}"/></g>`;
const up = (x, y) => `<path d="M${x} ${y + 1}l6 16h-4v6h4v4q-6 3-12 0v-4h4v-6h-4z"/>`;
const side = (x, y) => `<path d="M${x} ${y}l-8-13-6-1-4 5 2 5 4 1-2 3-6 1v-2h-5l-2 3v7l3 2 4-1 1-4 7-2v3z"/><path d="M${x - 14} ${y - 3}l8-1M${x - 13} ${y + 2}v4" stroke="#014d06" fill="none"/>`;
define('sw-model', `:host{display:block}svg{display:block;width:100%;height:100%}text{font-family:"Liberation Sans",sans-serif}`,
`<svg viewBox="0 58 1920 1080" preserveAspectRatio="xMidYMin meet" role="img" aria-label="Stress plot of the press frame">
<defs>
  <linearGradient id="air" gradientUnits="userSpaceOnUse" x1="0" y1="500" x2="0" y2="960"><stop offset="0" stop-color="#dcdee4"/><stop offset=".15" stop-color="#fff"/><stop offset=".5" stop-color="#ededed"/><stop offset="1" stop-color="#cbcbcc"/></linearGradient>
  <linearGradient id="slit" gradientUnits="userSpaceOnUse" x1="0" y1="222" x2="0" y2="1000"><stop offset="0" stop-color="#b2b7c6"/><stop offset=".3" stop-color="#b8bcc9"/><stop offset=".45" stop-color="#fff"/><stop offset=".7" stop-color="#eee"/><stop offset="1" stop-color="#ccc"/></linearGradient>
  <radialGradient id="glow"><stop offset="0" stop-color="#177850"/><stop offset=".25" stop-color="#08407a" stop-opacity=".8"/><stop offset="1" stop-color="#000070" stop-opacity="0"/></radialGradient>
  <radialGradient id="haze"><stop offset="0" stop-color="#052c88" stop-opacity=".6"/><stop offset="1" stop-color="#000070" stop-opacity="0"/></radialGradient>
  <linearGradient id="post" x1="0" y1="0" x2="0" y2="1"><stop offset="0" stop-color="#000070"/><stop offset=".4" stop-color="#00006c"/><stop offset=".7" stop-color="#001078"/><stop offset="1" stop-color="#000070"/></linearGradient>
  <clipPath id="rear"><path d="M773 601l235-39v47l-235 39z"/></clipPath>
  <clipPath id="front"><path d="M725 656l388-63 5 3v75l-388 65-5-2z"/></clipPath>
</defs>
<g fill="#000070" stroke="#000014" stroke-width="1.200" stroke-linejoin="round">
  <path d="M972 900l24-7 12-9 4 20-24 4z"/>
  <path d="M775 942l236-38 55 26 50 2-386 64 46-6z"/>
  <path d="M666 190l52 30 2 776 2 13-52-38-2-440z" fill="url(#post)"/>
  <path d="M1006 200l52 3 4 725-52 5z" fill="url(#post)"/>
  <path d="M1055 897v33M1055 897l9-5v36" fill="none"/>
</g>
<path d="M718 232h2l3 768h-2zM1057.500 222h2l3 675h-1.500z" fill="url(#slit)"/>
<path d="M1053 499l8-4v40l-8-5z" fill="#000070" stroke="#000014"/>
<g fill="#000070" stroke="#000014" stroke-width="1.200" stroke-linejoin="round">
  <path d="M720 225l51 40 2 200 2 522-50 9-3-436z" fill="url(#post)"/>
  <path d="M1060 205l51 3 1 250 3 470-50 10-2-500z" fill="url(#post)"/>
  <path d="M672 240l1 320M725 275l2 715M1009 228l3 700M1064 222l3 710" fill="none" stroke-opacity=".7"/>
</g>
<g>
  ${hole(1033, 521)}${hole(695, 742)}${hole(748, 774)}${hole(695, 825)}${hole(749, 857)}${hole(696, 907)}${hole(749, 939)}
  ${hole(1035, 767)}${hole(1036, 850)}${hole(1088, 718)}${hole(1088, 800)}${hole(1088, 882)}
  ${part(1086, 554, 'M1079 558q-1-8 4-11l3 4 3 0 4 5q-2 5-8 8-5-1-6-6z', '#fff')}
  ${part(1034, 688, 'M1027 689l13-2q0 8-8 7-4-1-5-5z', '#fff')}
  <path d="M693 571q4-3 7-1l3 5z" fill="#fff"/>
  ${part(747, 611, 'M741 607q1-5 8-5 5 1 5 4l-3-1z', '#fff')}
</g>
<g fill="#00006f" stroke="#000014" stroke-width="1.200" stroke-linejoin="round">
  <path d="M671 561l5 1 46 30v31l-51-29z"/>
  <path d="M663 620l4-1 4 4v74l-7 1z"/>
  <path d="M722 668l-26-17q-5-1-8 3-3 5-1 10 2 4 6 6l29 17" fill="#00066c" stroke="#00003c"/>
  <path d="M773 601l235-39v47l-235 39z"/><path d="M773 605l235-39" fill="none"/>
  <path d="M1025 604q3-10 12-9 7 1 9 6" fill="none"/>
</g>
<g clip-path="url(#rear)"><ellipse cx="861" cy="598" rx="70" ry="18" fill="url(#haze)"/><ellipse cx="861" cy="592" rx="20" ry="12" fill="url(#glow)"/></g>
<g fill="#000074" stroke="#000014" stroke-width="1.200" stroke-linejoin="round">
  <path d="M725 656l388-63 5 3v75l-388 65-5-2z"/>
  <path d="M731 658l387-61M731 658v77M725 656l6 2" fill="none"/>
</g>
<g clip-path="url(#front)"><ellipse cx="924" cy="640" rx="130" ry="34" fill="url(#haze)"/><ellipse cx="925" cy="706" rx="120" ry="14" fill="url(#haze)"/><ellipse cx="924" cy="629" rx="22" ry="12" fill="url(#glow)"/></g>
<path d="M857 591l9-2-4 6-3 1zM919 627l9-2-3 8-3 1z" fill="#149030"/>
<g fill="#000468" stroke="#00002c" stroke-width="1.200">
  <circle cx="755" cy="697" r="10.500"/><circle cx="761" cy="701" r="10"/><circle cx="762" cy="702" r="7"/>
  <circle cx="1093" cy="639" r="10.500"/><circle cx="1100" cy="643" r="11"/><circle cx="1102" cy="644" r="7"/>
</g>
<g fill="#000070" stroke="#000014" stroke-width="1.200" stroke-linejoin="round">
  <path d="M661 161l387-65 4 2 62 38v77l-387 65-9-2V225l-49-29v44l-8-2z"/>
  <path d="M669 196l49 30v12M661 161l66 40v77M727 201l387-65M676 165l374-63 50 30-374 63z" fill="none"/>
  <path d="M717 157v34M1006 108v42M1008.500 108v42M1050 102v30l9 6" fill="none"/>
</g>
<path d="M1058 137l3 2-2 2z" fill="#d5d8e0"/>
<g fill="#000074" stroke="#000014" stroke-width="1.200" stroke-linejoin="round">
  <path d="M730 996l387-65v30l-348 59-5-3z"/>
  <path d="M776 981l289-50" fill="none"/>
  <path d="M1115 926l2 1 40 24 15 44-32 7-56-34 33-7z"/><path d="M1117 962l18-5 37 38M1117 927v35M1150 948l20 47" fill="none" stroke-opacity=".6"/>
  <path d="M765 1018l6 11 42 26-13 6-21 1z"/>
  <path d="M629 937l5 0 133 80 14 45h-2l-167-100z"/>
  <path d="M676 959l88 58 15 45" fill="none"/>
</g>
<path d="M776 985l259-44 3 1-262 45z" fill="#dedede"/>
<g fill="#027a08" stroke="#01600a" stroke-width=".6">
  ${[[612,962],[668,997],[723,1030],[779,1062],[1084,969],[1139,1002]].map(([x, y]) => up(x, y)).join('')}
  ${[[612,962],[668,997],[723,1030],[779,1062],[1139,1002]].map(([x, y]) => side(x, y)).join('')}
  ${up(813, 1055)}${up(1172, 995)}
  <path d="M813 1055l-14-3-1 4-6-1-3 3v7l4 1 3-5 9 2z"/><path d="M797 1046l10 2 4 5-8-1z"/>
  <path d="M1172 995l-14-1-1 4-5-1-3 3v6l4 1 3-5 9 2z"/>
  <path d="M1084 969l-12 3-3 4-5-1-5-1-1 5 3 4 4-1 2-5 8 2z"/>
  ${side(972, 901)}
  <path d="M1004 893l-8-1-5-3v-6l5-4 5 1z"/><path d="M988 897l-8 0 4 4z"/>
  <path d="M640 982l8 2v3l-7-1zM697 1015l7 1v4l-6-2zM752 1047l7 2v4l-6-2zM1112 987l7 2v3l-6-1z"/>
</g>
<g fill="#24507a"><path d="M855 535h4v37h-4zM860.500 538h3.500v34h-3.500z"/><path d="M850 572q10 4 19 4l-9 14z"/></g>
<g fill="#406c8c"><path d="M917 572h3v37h-3zM922 574h3.500v35h-3.500z"/><path d="M912 608q9 4 19 4l-8 14z"/></g>
<path d="M855.500 585h5v5h-5z"/><path d="M860 588.500h41" stroke="#000"/>
<rect x="900.500" y="581.500" width="71" height="14" fill="#fff" stroke="#000"/>
<text x="903" y="592" font-size="11">Max: 4,599.6</text>
<g>
  <path d="M275 1071v-25" stroke="#1c1cc8" stroke-width="4"/><path d="M276 1038l5 12h-10z" fill="#3434d8"/>
  <path d="M277 1072l22-4" stroke="#145a14" stroke-width="4"/><path d="M297 1062l11 5-10 7z" fill="#0e5a10"/>
  <path d="M275 1071l10 6" stroke="#7a1010" stroke-width="5"/><circle cx="288" cy="1079" r="5" fill="#cc1414"/>
  <text x="270" y="1035" font-size="12" fill="#1414d8">Z</text><text x="306" y="1069" font-size="12" fill="#128a12">Y</text><text x="290" y="1087" font-size="12" fill="#e01414">X</text>
</g>
</svg>`);

define('sw-legend', `
  :host{display:grid;grid-template-columns:21px 22px 1fr;font:11px "Liberation Sans",sans-serif;color:#000;white-space:nowrap}
  h2{grid-column:2/4;margin:0;font:inherit;height:35px;line-height:14px}
  .bar{grid-column:2;position:relative;width:20px;height:336px;margin-top:4px;border-top:1px solid #000;border-bottom:1px solid #003;background:linear-gradient(#f00,#ff0 25%,#0f0 50%,#0ff 75%,#00f)}
  .ticks{position:absolute;top:-1px;left:100%;width:2px;height:337px;background:repeating-linear-gradient(#000 0 1px,transparent 1px 28px)}
  ol{list-style:none;margin:-14px 0 0;padding:0 0 0 8px}
  li{height:28px;line-height:28px}
  .mark{width:20px;height:9px;grid-column:1;grid-row:2;align-self:end;margin-bottom:26px}
  .yield{grid-column:1/4;display:flex;align-items:center;gap:3px;height:20px;margin-top:3px}
  .yield svg{width:20px;height:9px}`,
  (() => {
    const arrow = c => `<svg class="${c}" viewBox="0 0 20 9" aria-hidden="true"><path d="M0 4.500h14" stroke="#e01010"/><path d="M13 0l7 4.500L13 9z" fill="#e01010"/></svg>`;
    return `<h2>von Mises (N/mm^2 (MPa))</h2>${arrow('mark')}<div class="bar"><div class="ticks"></div></div>
    <ol>${['4,599.6','4,216.3','3,833.0','3,449.7','3,066.4','2,683.1','2,299.8','1,916.5','1,533.2','1,149.9','766.6','383.3','0.0'].map(t => `<li>${t}</li>`).join('')}</ol>
    <div class="yield">${arrow('')}<span>Yield strength: 275.0</span></div>`;
  })());

define('sw-task-pane', `
  :host{display:flex;flex-direction:column;gap:1px}
  button{width:24px;height:23px;display:flex;align-items:center;justify-content:center;border:1px solid #777c92;border-right:0;border-radius:4px 0 0 4px;background:linear-gradient(90deg,#c6cad8,#abb0c2)}
  button.on{background:#eef0f6}`,
  ['home','library','folder','swsearch','palette','ball','props'].map(n => `<button type="button" aria-label="${n}" class="${n === 'palette' ? 'on' : ''}"><sw-icon name="${n}"></sw-icon></button>`).join(''));

define('sw-viewport', `
  :host{display:block;position:relative;overflow:hidden;border-right:1px solid #777c92;background:
    radial-gradient(ellipse 45% 45% at 55% 106%,rgba(70,70,85,.26),rgba(90,90,100,.13) 50%,rgba(120,120,130,0)),
    linear-gradient(180deg,#a0a5b6 0,#a8adbe 20%,#b0b5c5 32%,#bfc3d0 37%,#d6d8e0 41%,#ecedf0 45%,#fafafa 50%,#fcfcfc 56%,#f0f0f0 65%,#e0e0e0 75%,#d4d4d4 86%,#c9c9cb 100%)}
  sw-model{position:absolute;inset:0 -1px 0 0}
  .hud{position:absolute;top:3px;left:227px;right:0;padding-right:4px;display:flex;justify-content:center}
  .win{position:absolute;top:3px;right:4px;display:flex}
  .info{position:absolute;left:242px;top:31px;margin:0;font:11px/14px "Liberation Sans",sans-serif}
  sw-legend{position:absolute;top:218px;right:208px;width:149px}
  sw-task-pane{position:absolute;top:60px;right:-1px}`,
  `<sw-model></sw-model>
  <div class="hud"><sw-tool icon="zoomfit" label="Zoom to fit"></sw-tool><sw-tool icon="zoomarea" label="Zoom to area"></sw-tool><sw-tool icon="pan" label="Pan"></sw-tool><sw-tool icon="rotate" label="Rotate"></sw-tool><sw-tool icon="g1" label="Roll"></sw-tool><sw-tool icon="g2" label="Previous view"></sw-tool><sw-tool icon="g3" label="Zoom selection"></sw-tool><sw-tool icon="sectview" label="Section view"></sw-tool><sw-tool icon="cube" label="Display style" menu tight></sw-tool><sw-tool icon="glasses" label="Hide or show" menu tight></sw-tool><sw-tool icon="scene" label="Scene" menu tight></sw-tool><sw-tool icon="gold" label="Appearance" menu tight></sw-tool></div>
  <div class="win"><sw-tool icon="min" label="Minimize document"></sw-tool><sw-tool icon="restore" label="Restore document"></sw-tool><sw-tool icon="close" label="Close document"></sw-tool></div>
  <p class="info">Model name: DISPOSITIVO PARA DOBRAR BARRAMENTO<br>Study name: Study 1<br>Plot type: Static nodal stress Stress1<br>Deformation scale: 1</p>
  <sw-legend></sw-legend><sw-task-pane></sw-task-pane>`);

define('sw-study-tabs', `
  :host{display:flex;height:16px;border-top:1px solid #14151c;background:#e1e4ec;font:14px "Liberation Sans",sans-serif;padding-left:2px}
  .nav{width:15px;margin-right:1px;border:1px solid #8f93aa;background:#b1b4ca;display:flex;align-items:center;justify-content:center}
  .nav sw-icon{width:12px;height:12px}
  .tab{border:1px solid #4d4f68;border-top:0;border-right:0;background:#b9bdd0;height:14px;line-height:12px;padding-bottom:2px;text-align:center;white-space:nowrap}
  .tab:nth-of-type(5){width:64px;margin-left:3px}
  .tab:nth-of-type(6){width:118px}
  .tab.on{display:flex;align-items:center;gap:6px;width:90px;height:15px;padding:0 0 2px 6px;border:0;border-right:2px solid #4d4f68;background:linear-gradient(#e9ebf3,#c9cddd);font-weight:700}
  .tab.on sw-icon{width:12px;height:12px}`,
  `${['first','prev','next','last'].map(n => `<button type="button" class="nav" aria-label="${n} tab"><sw-icon name="${n}"></sw-icon></button>`).join('')}<button type="button" class="tab">Model</button><button type="button" class="tab">Motion Study 1</button><button type="button" class="tab on"><sw-icon name="studytab"></sw-icon>Study 1</button>`);

define('sw-app', `
  :host{display:grid;grid-template-rows:29px 29px 1fr 16px;height:100vh}
  main{display:grid;grid-template:20px minmax(0,1fr) / 227px minmax(0,1fr);min-height:0}
  sw-viewport{grid-area:1/1/3/3}
  sw-command-tabs{grid-area:1/1/2/3;z-index:2;justify-self:start}
  sw-study-tree{grid-area:2/1;z-index:1}`,
  `<sw-menu-bar></sw-menu-bar><sw-tool-rows></sw-tool-rows>
  <main><sw-viewport></sw-viewport><sw-command-tabs></sw-command-tabs><sw-study-tree></sw-study-tree></main>
  <sw-study-tabs></sw-study-tabs>`);
</script>
</body>
</html>
